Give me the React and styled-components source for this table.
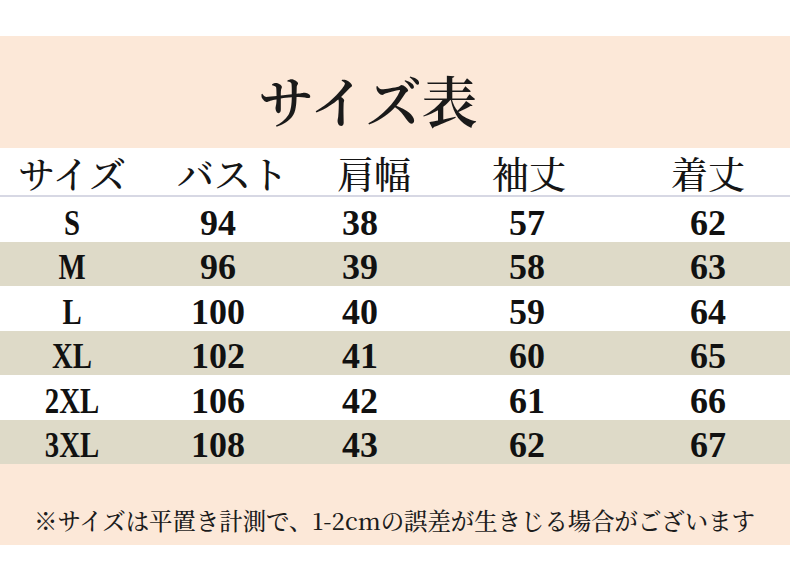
import React from "react";
import styled, { createGlobalStyle } from "styled-components";

const GlobalStyle = createGlobalStyle`
  html, body {
    margin: 0;
    padding: 0;
    background: #ffffff;
  }
`;

const JP = `"Noto Serif CJK JP", "Noto Sans CJK JP", sans-serif`;
const NUM = `"Liberation Serif", "Noto Serif CJK JP", serif`;

const headers = [
  { label: "サイズ", width: 159 },
  { label: "バスト", width: 160 },
  { label: "肩幅", width: 155 },
  { label: "袖丈", width: 179 },
  { label: "着丈", width: 100 },
];

const rows = [
  ["S", 94, 38, 57, 62],
  ["M", 96, 39, 58, 63],
  ["L", 100, 40, 59, 64],
  ["XL", 102, 41, 60, 65],
  ["2XL", 106, 42, 61, 66],
  ["3XL", 108, 43, 62, 67],
];

const App = () => {
  return (
    <>
      <GlobalStyle />
      <StPage>
        <StTitleBand>
          <StTitle>サイズ表</StTitle>
        </StTitleBand>

        <StHeaderRow>
          {headers.map((h) => (
            <StHeadCell key={h.label} $width={h.width}>
              {h.label}
            </StHeadCell>
          ))}
        </StHeaderRow>

        {/* 사이즈 데이터 */}
        {rows.map((row, i) => (
          <StRow key={row[0]} $shaded={i % 2 === 1}>
            <StCell>
              <StSizeText>{row[0]}</StSizeText>
            </StCell>
            {row.slice(1).map((v, j) => (
              <StCell key={j}>{v}</StCell>
            ))}
          </StRow>
        ))}

        <StNoteBand>
          <StNote>※サイズは平置き計測で、1-2cmの誤差が生きじる場合がございます</StNote>
        </StNoteBand>
      </StPage>
    </>
  );
};

export default App;

const StPage = styled.div`
  width: 790px;
  height: 561px;
  padding-top: 36px;
  box-sizing: border-box;
  background: #ffffff;
  overflow: hidden;
`;

const StTitleBand = styled.div`
  height: 112px;
  background: #fce8d8;
  display: flex;
  align-items: center;
  padding: 14px 0 0 258px;
  box-sizing: border-box;
`;

const StTitle = styled.h1`
  margin: 0;
  font-family: ${JP};
  font-size: 56px;
  font-weight: 600;
  line-height: 1;
  color: #1a1a1a;
  white-space: nowrap;
`;

const StHeaderRow = styled.div`
  height: 49px;
  display: flex;
  align-items: center;
  padding: 4px 0 0 18px;
  box-sizing: border-box;
  background: #ffffff;
  border-bottom: 2px solid #d7d8e4;
`;

const StHeadCell = styled.div`
  width: ${(props) => props.$width}px;
  flex-shrink: 0;
  font-family: ${JP};
  font-size: 37px;
  font-weight: 500;
  line-height: 1;
  color: #151515;
  white-space: nowrap;
`;

const StRow = styled.div`
  height: 44.5px;
  display: grid;
  grid-template-columns: 144px 148px 136px 198px 164px;
  align-items: center;
  padding-top: 7px;
  box-sizing: border-box;
  background: ${(props) => (props.$shaded ? "#dedac8" : "#ffffff")};
`;

const StCell = styled.div`
  text-align: center;
  font-family: ${NUM};
  font-size: 36px;
  font-weight: 700;
  line-height: 1;
  color: #111111;
`;

const StSizeText = styled.span`
  display: inline-block;
  transform: scaleX(0.8);
`;

const StNoteBand = styled.div`
  height: 81px;
  background: #fce8d8;
  display: flex;
  align-items: center;
  padding: 32px 0 0 34px;
  box-sizing: border-box;
`;

const StNote = styled.p`
  margin: 0;
  font-family: ${JP};
  font-size: 23.4px;
  font-weight: 500;
  line-height: 1;
  color: #1c1c1c;
  white-space: nowrap;
`;
